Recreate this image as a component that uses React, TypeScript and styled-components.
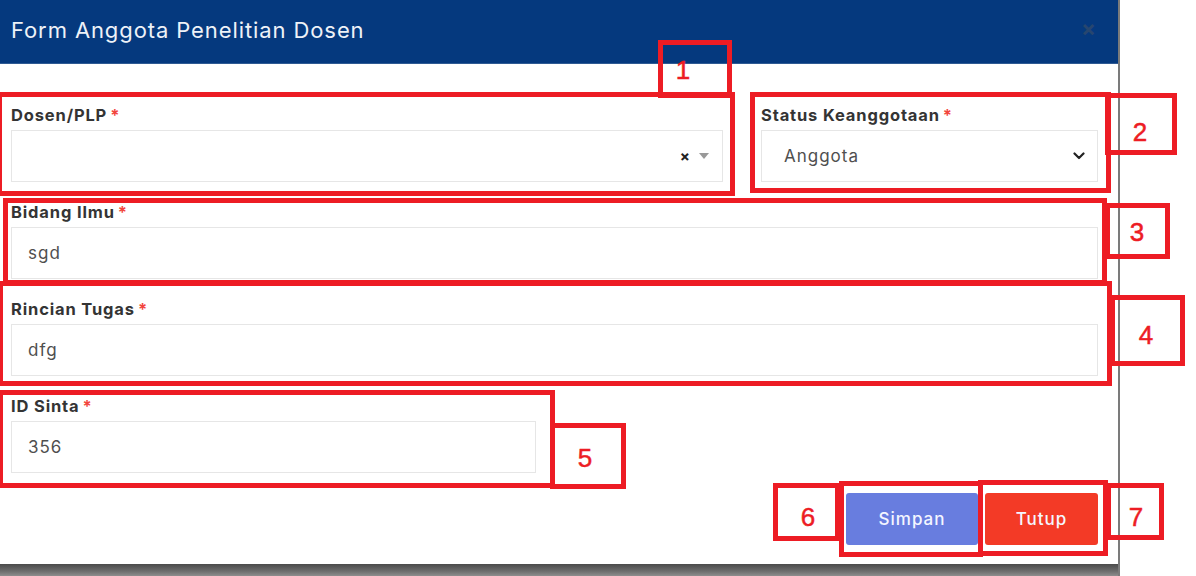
import React from 'react';
import styled, { createGlobalStyle } from 'styled-components';

const GlobalStyle = createGlobalStyle`
  html, body {
    margin: 0;
    padding: 0;
    background: #ffffff;
  }

  body {
    font-family: 'Inter', 'Open Sans', sans-serif;
  }
`;

const Page = styled.div`
  position: relative;
  width: 1196px;
  height: 576px;
  overflow: hidden;
  background: #ffffff;
`;

const Modal = styled.div`
  width: 1118px;
  height: 576px;
  display: flex;
  flex-direction: column;
  background: #ffffff;
  border-right: 2px solid #7b7b7b;
`;

const Header = styled.div`
  height: 64px;
  box-sizing: border-box;
  display: flex;
  align-items: center;
  justify-content: space-between;
  padding: 0 22px 4px 11px;
  background: #05397e;
  border-bottom: 1px solid #2f5a93;
`;

const Title = styled.h4`
  margin: 0;
  color: #eef2f8;
  font-size: 22px;
  font-weight: 400;
  letter-spacing: 0.9px;
`;

const Close = styled.span`
  color: #27466f;
  font-size: 22px;
  font-weight: 700;
  line-height: 1;
  margin-top: -4px;
`;

const Body = styled.div`
  flex: 1;
  display: flex;
  flex-direction: column;
  padding: 41px 20px 0 11px;
`;

const Row = styled.div`
  display: grid;
  grid-template-columns: 712px 337px;
  column-gap: 38px;
`;

const Field = styled.div<{ $width?: number }>`
  display: flex;
  flex-direction: column;
  margin-bottom: 20px;
  width: ${({ $width }) => ($width ? `${$width}px` : 'auto')};
`;

const Label = styled.label`
  height: 20px;
  line-height: 20px;
  margin-bottom: 5px;
  color: #343434;
  font-size: 16.5px;
  font-weight: 700;
  letter-spacing: 0.85px;
  white-space: nowrap;
`;

const Required = styled.span`
  color: #f2453d;
  margin-left: 3px;
`;

const Control = styled.div<{ $pad?: number }>`
  height: 52px;
  box-sizing: border-box;
  display: flex;
  align-items: center;
  padding: 0 12px 0 ${({ $pad }) => $pad ?? 16}px;
  border: 1px solid #e6e6e6;
  background: #ffffff;
  color: #4f4f4f;
  font-size: 17px;
  letter-spacing: 1px;
`;

const Value = styled.span`
  flex: 1;
`;

const ClearMark = styled.span`
  color: #222222;
  font-size: 15px;
  font-weight: 700;
  margin-right: 8px;
  line-height: 1;
`;

const Caret = styled.span`
  width: 0;
  height: 0;
  border-left: 5px solid transparent;
  border-right: 5px solid transparent;
  border-top: 6px solid #999999;
  margin-right: 1px;
`;

const Footer = styled.div`
  display: flex;
  justify-content: flex-end;
  gap: 7px;
`;

const Button = styled.button<{ $color: string; $width: number }>`
  width: ${({ $width }) => $width}px;
  height: 52px;
  border: none;
  border-radius: 3px;
  background: ${({ $color }) => $color};
  color: #f4f6ff;
  font-family: 'Inter', 'Open Sans', sans-serif;
  font-size: 17px;
  font-weight: 500;
  letter-spacing: 1px;
`;

const BottomEdge = styled.div`
  height: 12px;
  background: linear-gradient(#4b4b4b, #6d6d6d 60%, #8d8d8d);
`;

// annotation overlay (red marker boxes drawn over the screenshot)
const Marks = styled.div`
  position: absolute;
  inset: 0;
  pointer-events: none;
`;

const MarkBox = styled.div`
  position: absolute;
  box-sizing: border-box;
  border: 5px solid #ed1c24;
`;

const MarkNumber = styled.span`
  position: absolute;
  transform: translate(-50%, -50%);
  color: #ed1c24;
  font-family: 'Liberation Sans', Arial, sans-serif;
  font-size: 26px;
  line-height: 1;
  -webkit-text-stroke: 0.5px #ed1c24;
`;

type Rect = [number, number, number, number];

const boxes: Rect[] = [
  [658, 40, 732, 98],
  [-3, 92, 735, 196],
  [750, 92, 1111, 193],
  [1105, 93, 1177, 155],
  [3, 198, 1107, 285],
  [1105, 203, 1170, 259],
  [-2, 281, 1112, 386],
  [1110, 295, 1185, 366],
  [-2, 390, 555, 488],
  [550, 423, 626, 489],
  [773, 483, 840, 541],
  [839, 481, 983, 557],
  [978, 480, 1108, 556],
  [1106, 483, 1164, 540],
];

const numbers: [string, number, number][] = [
  ['1', 683, 70],
  ['2', 1140, 132],
  ['3', 1137, 232],
  ['4', 1146, 335],
  ['5', 585, 458],
  ['6', 808, 517],
  ['7', 1136, 517],
];

const Chevron = () => (
  <svg width="12" height="8" viewBox="0 0 12 8">
    <path d="M1.5 1.5 L6 6 L10.5 1.5" fill="none" stroke="#222" strokeWidth="2.2" strokeLinecap="round" strokeLinejoin="round" />
  </svg>
);

export default function App() {
  return (
    <Page>
      <GlobalStyle />
      <Modal>
        <Header>
          <Title>Form Anggota Penelitian Dosen</Title>
          <Close>×</Close>
        </Header>
        <Body>
          <Row>
            <Field>
              <Label>Dosen/PLP<Required>*</Required></Label>
              <Control>
                <Value />
                <ClearMark>×</ClearMark>
                <Caret />
              </Control>
            </Field>
            <Field>
              <Label>Status Keanggotaan<Required>*</Required></Label>
              <Control $pad={22}>
                <Value>Anggota</Value>
                <Chevron />
              </Control>
            </Field>
          </Row>
          <Field>
            <Label>Bidang Ilmu<Required>*</Required></Label>
            <Control><Value>sgd</Value></Control>
          </Field>
          <Field>
            <Label>Rincian Tugas<Required>*</Required></Label>
            <Control><Value>dfg</Value></Control>
          </Field>
          <Field $width={525}>
            <Label>ID Sinta<Required>*</Required></Label>
            <Control><Value>356</Value></Control>
          </Field>
          <Footer>
            <Button $color="#687ddf" $width={132}>Simpan</Button>
            <Button $color="#f33a26" $width={113}>Tutup</Button>
          </Footer>
        </Body>
        <BottomEdge />
      </Modal>
      <Marks>
        {boxes.map(([l, t, r, b], i) => (
          <MarkBox key={i} style={{ left: l, top: t, width: r - l, height: b - t }} />
        ))}
        {numbers.map(([n, x, y]) => (
          <MarkNumber key={n} style={{ left: x, top: y }}>{n}</MarkNumber>
        ))}
      </Marks>
    </Page>
  );
}
